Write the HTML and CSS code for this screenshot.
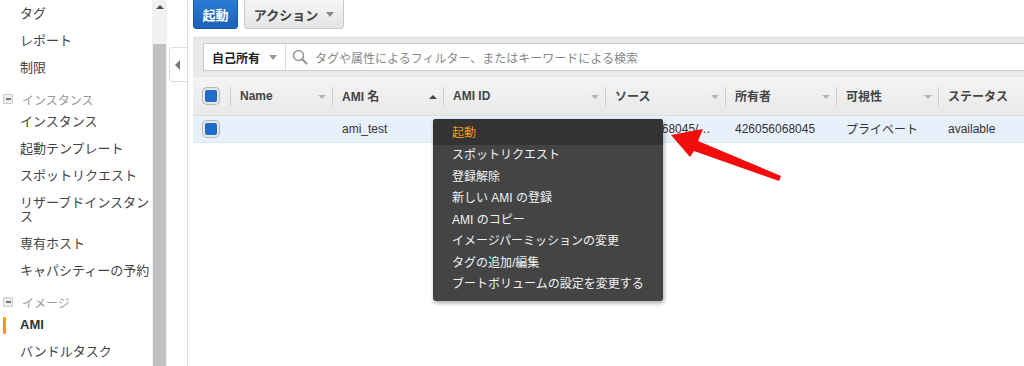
FILE: index.html
```html
<!DOCTYPE html>
<html lang="ja">
<head>
    <meta charset="UTF-8">
    <meta name="viewport" content="width=device-width, initial-scale=1.0">
    <title>AMI</title>
    <link rel="stylesheet" href="styles.css">
</head>
<body>
    <div class="app">
        <nav class="sidebar">
            <ul class="nav-list">
                <li class="nav-item">タグ</li>
                <li class="nav-item">レポート</li>
                <li class="nav-item">制限</li>
                <li class="nav-section"><span class="toggle"></span>インスタンス</li>
                <li class="nav-item">インスタンス</li>
                <li class="nav-item">起動テンプレート</li>
                <li class="nav-item">スポットリクエスト</li>
                <li class="nav-item">リザーブドインスタンス</li>
                <li class="nav-item">専有ホスト</li>
                <li class="nav-item">キャパシティーの予約</li>
                <li class="nav-section"><span class="toggle"></span>イメージ</li>
                <li class="nav-item active">AMI</li>
                <li class="nav-item">バンドルタスク</li>
            </ul>
        </nav>
        <div class="scrollbar">
            <span class="scroll-up"></span>
            <div class="scroll-thumb"></div>
        </div>
        <div class="gutter">
            <div class="collapse-tab"><span class="tab-arrow"></span></div>
        </div>

        <main class="main">
            <div class="toolbar">
                <button class="btn btn-primary">起動</button>
                <button class="btn btn-default">アクション<span class="caret"></span></button>
            </div>

            <div class="filter-panel">
                <div class="filter-box">
                    <div class="owner-select">自己所有<span class="caret"></span></div>
                    <svg class="search-icon" width="16" height="16" viewBox="0 0 16 16">
                        <circle cx="6.5" cy="6.5" r="5" fill="none" stroke="#999" stroke-width="1.6"/>
                        <line x1="10.2" y1="10.2" x2="14.5" y2="14.5" stroke="#999" stroke-width="2.2" stroke-linecap="round"/>
                    </svg>
                    <span class="placeholder">タグや属性によるフィルター、またはキーワードによる検索</span>
                </div>
            </div>

            <table class="grid">
                <colgroup>
                    <col style="width:37px">
                    <col style="width:102px">
                    <col style="width:111px">
                    <col style="width:162px">
                    <col style="width:120px">
                    <col style="width:111px">
                    <col style="width:102px">
                    <col style="width:120px">
                </colgroup>
                <thead>
                    <tr>
                        <th class="check-cell"><span class="checkbox"></span></th>
                        <th>Name<span class="sort"></span></th>
                        <th>AMI 名<span class="sort up"></span></th>
                        <th>AMI ID<span class="sort"></span></th>
                        <th>ソース<span class="sort"></span></th>
                        <th>所有者<span class="sort"></span></th>
                        <th>可視性<span class="sort"></span></th>
                        <th>ステータス</th>
                    </tr>
                </thead>
                <tbody>
                    <tr class="selected">
                        <td class="check-cell"><span class="checkbox"></span></td>
                        <td></td>
                        <td>ami_test</td>
                        <td></td>
                        <td class="source">426056068045/…</td>
                        <td>426056068045</td>
                        <td>プライベート</td>
                        <td class="status">available</td>
                    </tr>
                </tbody>
            </table>
        </main>

        <ul class="context-menu">
            <li class="menu-item hover">起動</li>
            <li class="menu-item">スポットリクエスト</li>
            <li class="menu-item">登録解除</li>
            <li class="menu-item">新しい AMI の登録</li>
            <li class="menu-item">AMI のコピー</li>
            <li class="menu-item">イメージパーミッションの変更</li>
            <li class="menu-item">タグの追加/編集</li>
            <li class="menu-item">ブートボリュームの設定を変更する</li>
        </ul>

        <svg class="annotation" width="1024" height="366" viewBox="0 0 1024 366">
            <polygon fill="#f20d0d" points="671,135 703,129 698,141 781,176 779,181 694,151 690,157"/>
        </svg>
    </div>
</body>
</html>
```

FILE: styles.css
```css
* {
    box-sizing: border-box;
}
body {
    margin: 0;
    font-family: "Liberation Sans", "Noto Sans CJK JP", sans-serif;
    color: #444;
    background: #fff;
    overflow: hidden;
}
.app {
    position: relative;
    display: flex;
    height: 366px;
    width: 1024px;
    overflow: hidden;
}

/* left navigation */
.sidebar {
    width: 152px;
    flex-shrink: 0;
}
.nav-list {
    list-style: none;
    margin: 0;
    padding: 0;
}
.nav-item {
    position: relative;
    padding: 6.5px 0 6.5px 20px;
    font-size: 13px;
    line-height: 14px;
    color: #444;
}
.nav-item.active {
    font-weight: bold;
    color: #333;
}
.nav-item.active::before {
    content: "";
    position: absolute;
    left: 3px;
    top: 6px;
    width: 3px;
    height: 17px;
    background: #f90;
    border-radius: 1px;
}
.nav-section {
    display: flex;
    align-items: center;
    margin-top: 9px;
    height: 18px;
    font-size: 12px;
    color: #999;
}
.toggle {
    width: 10px;
    height: 10px;
    margin: 0 9px 0 3px;
    border: 1px solid #ccc;
    background: #eee;
    border-radius: 1px;
    display: flex;
    align-items: center;
    justify-content: center;
}
.toggle::after {
    content: "";
    width: 5px;
    height: 2px;
    background: #777;
}

/* fake scrollbar */
.scrollbar {
    width: 15px;
    flex-shrink: 0;
    background: #f1f1f1;
    display: flex;
    flex-direction: column;
    align-items: center;
}
.scroll-up {
    margin-top: 5px;
    width: 0;
    height: 0;
    border-left: 4px solid transparent;
    border-right: 4px solid transparent;
    border-bottom: 4px solid #505050;
}
.scroll-thumb {
    margin-top: 35px;
    width: 13px;
    flex: 1;
    background: #c1c1c1;
}

.gutter {
    width: 20px;
    flex-shrink: 0;
    padding-top: 47px;
    padding-left: 2px;
}
.collapse-tab {
    width: 18px;
    height: 35px;
    border: 1px solid #ddd;
    border-right: none;
    border-radius: 4px 0 0 4px;
    background: #fff;
    display: flex;
    align-items: center;
    justify-content: center;
}
.tab-arrow {
    width: 0;
    height: 0;
    border-top: 5px solid transparent;
    border-bottom: 5px solid transparent;
    border-right: 5px solid #777;
    margin-left: -2px;
}

/* main area */
.main {
    flex: 1;
    border-left: 1px solid #ddd;
    padding-left: 5px;
    min-width: 0;
}
.toolbar {
    display: flex;
    gap: 6px;
    height: 37px;
    align-items: flex-start;
}
.btn {
    display: flex;
    align-items: center;
    justify-content: center;
    margin-top: -4px;
    height: 33px;
    padding: 4px 0 0;
    font-family: inherit;
    font-size: 13px;
    font-weight: bold;
    white-space: nowrap;
    border-radius: 0 0 3px 3px;
    cursor: pointer;
}
.btn-primary {
    width: 45px;
    color: #fff;
    background: linear-gradient(#2b7fd6, #1a62b8);
    border: 1px solid #1a5aa8;
}
.btn-default {
    width: 100px;
    color: #444;
    background: linear-gradient(#f8f8f8, #e4e4e4);
    border: 1px solid #c8c8c8;
}
.caret {
    display: inline-block;
    width: 0;
    height: 0;
    margin-left: 8px;
    border-left: 4px solid transparent;
    border-right: 4px solid transparent;
    border-top: 5px solid #888;
}

.filter-panel {
    background: #e9e9e9;
    border-top: 1px solid #ddd;
    padding: 5px 0 6px 10px;
}
.filter-box {
    display: flex;
    align-items: center;
    height: 28px;
    background: #fff;
    border: 1px solid #ccc;
    border-right: none;
}
.owner-select {
    width: 82px;
    height: 100%;
    display: flex;
    align-items: center;
    padding-left: 8px;
    font-size: 12px;
    font-weight: bold;
    color: #222;
    border-right: 1px solid #ddd;
}
.owner-select .caret {
    margin-left: 9px;
    border-top-color: #999;
}
.search-icon {
    margin: 0 7px 0 6px;
}
.placeholder {
    font-size: 12px;
    color: #888;
}

/* table */
.grid {
    border-collapse: collapse;
    table-layout: fixed;
    width: 865px;
    font-size: 12px;
}
.grid th {
    position: relative;
    height: 38px;
    padding: 0 0 0 10px;
    text-align: left;
    font-weight: bold;
    color: #444;
    background: linear-gradient(#f4f4f4, #e9e9e9);
    border-bottom: 1px solid #ddd;
    white-space: nowrap;
}
.grid th + th::before {
    content: "";
    position: absolute;
    left: 0;
    top: 10px;
    height: 19px;
    border-left: 1px solid #ccc;
}
.grid td {
    height: 27px;
    padding: 0 0 0 10px;
    color: #333;
    white-space: nowrap;
    overflow: hidden;
}
.grid .selected td {
    background: #e8f0fb;
    border-bottom: 1px solid #dce6f4;
}
.grid .check-cell {
    padding-left: 10px;
}
.checkbox {
    display: block;
    width: 16px;
    height: 16px;
    border: 2px solid #e6e6e6;
    border-radius: 4px;
    background: #1e6ccc;
    box-shadow: 0 0 0 1px #b8b8b8;
}
.sort {
    position: absolute;
    right: 6px;
    top: 18px;
    width: 0;
    height: 0;
    border-left: 4px solid transparent;
    border-right: 4px solid transparent;
    border-top: 4px solid #b4b4b4;
}
.sort.up {
    border-top: none;
    border-bottom: 4px solid #444;
}
.status {
    color: #2a9d36;
}

/* context menu over the grid */
.context-menu {
    position: absolute;
    left: 433px;
    top: 119px;
    width: 230px;
    margin: 0;
    padding: 0 0 5px;
    list-style: none;
    background: #444;
    border-radius: 3px;
    box-shadow: 1px 2px 4px rgba(0, 0, 0, 0.35);
    overflow: hidden;
}
.menu-item {
    height: 21.5px;
    line-height: 21.5px;
    padding-left: 19px;
    font-size: 12px;
    color: #f2f2f2;
    white-space: nowrap;
}
.menu-item.hover {
    height: 26px;
    line-height: 28px;
    background: #333;
    color: #f09b1a;
}

.annotation {
    position: absolute;
    left: 0;
    top: 0;
    pointer-events: none;
}
```
